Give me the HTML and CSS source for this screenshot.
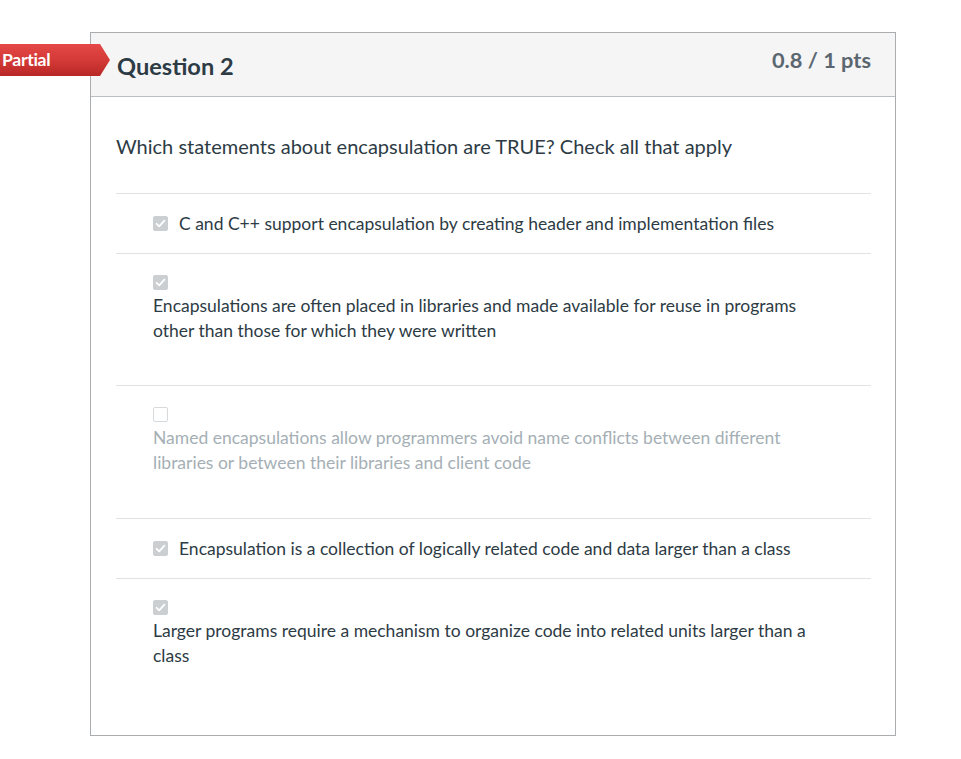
FILE: index.html
```html
<!DOCTYPE html>
<html>
<head>
<meta charset="utf-8">
<link rel="stylesheet" href="styles.css">
</head>
<body>
<div class="page">
  <div class="badge">Partial</div>
  <div class="card">
    <div class="card-header">
      <h2 class="title">Question 2</h2>
      <div class="pts">0.8 / 1 pts</div>
    </div>
    <div class="card-body">
      <p class="question">Which statements about encapsulation are TRUE? Check all that apply</p>
      <div class="answers">
        <div class="answer inline">
          <span class="cb checked"><svg viewBox="0 0 15 15" width="15" height="15"><path d="M3.6 7.8l2.6 2.5 5.2-5.6" fill="none" stroke="#fff" stroke-width="1.8" stroke-linecap="round" stroke-linejoin="round"/></svg></span>
          <span class="text">C and C++ support encapsulation by creating header and implementation files</span>
        </div>
        <div class="answer block tall">
          <span class="cb checked"><svg viewBox="0 0 15 15" width="15" height="15"><path d="M3.6 7.8l2.6 2.5 5.2-5.6" fill="none" stroke="#fff" stroke-width="1.8" stroke-linecap="round" stroke-linejoin="round"/></svg></span>
          <div class="text">Encapsulations are often placed in libraries and made available for reuse in programs other than those for which they were written</div>
        </div>
        <div class="answer block taller disabled">
          <span class="cb"></span>
          <div class="text">Named encapsulations allow programmers avoid name conflicts between different libraries or between their libraries and client code</div>
        </div>
        <div class="answer inline">
          <span class="cb checked"><svg viewBox="0 0 15 15" width="15" height="15"><path d="M3.6 7.8l2.6 2.5 5.2-5.6" fill="none" stroke="#fff" stroke-width="1.8" stroke-linecap="round" stroke-linejoin="round"/></svg></span>
          <span class="text">Encapsulation is a collection of logically related code and data larger than a class</span>
        </div>
        <div class="answer block last">
          <span class="cb checked"><svg viewBox="0 0 15 15" width="15" height="15"><path d="M3.6 7.8l2.6 2.5 5.2-5.6" fill="none" stroke="#fff" stroke-width="1.8" stroke-linecap="round" stroke-linejoin="round"/></svg></span>
          <div class="text">Larger programs require a mechanism to organize code into related units larger than a class</div>
        </div>
      </div>
    </div>
  </div>
</div>
</body>
</html>
```
FILE: styles.css
```css
* { box-sizing: border-box; }
html, body { margin: 0; padding: 0; background: #fff; }
body {
  font-family: Lato, "Open Sans", "Liberation Sans", sans-serif;
  color: #2d3b45;
}
.page {
  position: relative;
  padding: 32px 0 0 90px;
}
.badge {
  position: absolute;
  left: 0;
  top: 44px;
  width: 110px;
  height: 32px;
  padding-left: 2px;
  line-height: 31px;
  font-size: 17.6px;
  font-weight: 700;
  color: #fff;
  letter-spacing: -0.3px;
  background: linear-gradient(#e54846 0%, #d43a37 50%, #b82826 100%);
  clip-path: polygon(0 0, 100px 0, 110px 50%, 100px 100%, 0 100%);
  z-index: 2;
}
.card {
  width: 806px;
  height: 704px;
  border: 1px solid #a9adb0;
  background: #fff;
}
.card-header {
  height: 64px;
  background: #f5f5f5;
  border-bottom: 1px solid #b9bfc3;
  display: flex;
  justify-content: space-between;
  align-items: flex-start;
  padding: 0 24px 0 26px;
}
.title {
  margin: 0;
  padding-top: 17px;
  font-size: 23.6px;
  font-weight: 700;
  line-height: 32px;
  color: #2d3b45;
}
.pts {
  padding-top: 12px;
  font-size: 21.8px;
  font-weight: 700;
  line-height: 30px;
  color: #5b6770;
}
.card-body {
  padding: 0 24px 0 25px;
}
.question {
  margin: 0;
  padding: 35px 0 33px;
  font-size: 20px;
  line-height: 28px;
  color: #2d3b45;
}
.answers {
  border-top: 1px solid #e0e3e5;
}
.answer {
  border-bottom: 1px solid #e0e3e5;
  padding: 0 30px 0 37px;
  font-size: 17.5px;
  color: #2d3b45;
}
.answer.last { border-bottom: none; }
.answer.inline {
  display: flex;
  align-items: center;
  gap: 11px;
  height: 60px;
}
.answer.block {
  padding-top: 21px;
}
.answer.tall { height: 132px; }
.answer.taller { height: 133px; }
.answer.block .cb { display: block; margin-bottom: 3px; }
.answer .text { line-height: 25px; }
.answer.disabled { color: #a5afb5; }
.cb {
  width: 15px;
  height: 15px;
  border-radius: 2px;
  flex: none;
  background: #fff;
  border: 1px solid #d7dadc;
}
.cb.checked {
  background: #cbcfd2;
  border-color: #cbcfd2;
  display: flex;
  align-items: center;
  justify-content: center;
}
.cb svg { display: block; margin: -1px; }
```
